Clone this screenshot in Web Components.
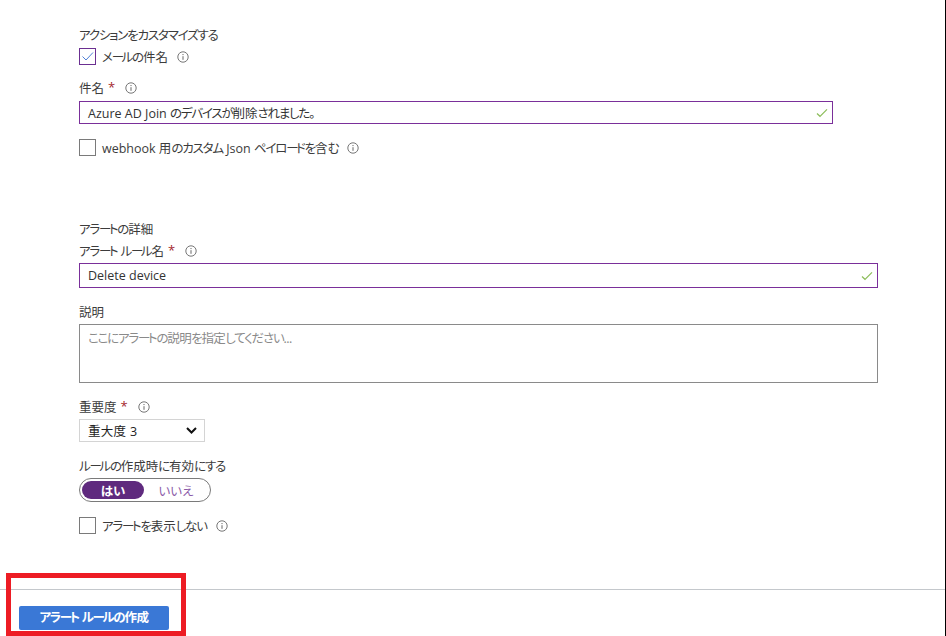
<!DOCTYPE html>
<html lang="ja">
<head>
<meta charset="utf-8">
<title>アラート ルールの作成</title>
<style>
  html, body { margin: 0; height: 100%; background: #fff; }
  body { font: 12.5px "Open Sans", "Noto Sans CJK JP", sans-serif; font-feature-settings: "palt"; color: #3c3c3c; overflow: hidden; }
</style>
</head>
<body>
<alert-page></alert-page>
<script>
const INFO = `<svg width="12" height="12" viewBox="0 0 12 12" fill="none" stroke="#666"><circle cx="6" cy="6" r="5.2" stroke-width=".9"/><path d="M6 5.2v3.6M6 3v1.1" stroke-width="1"/></svg>`;

// kana runs sit tighter than kanji in the reference font, long vowel marks tighter still
const fit = s => s.replace(/ー|[ぁ-んァ-ヶ]+/g, m =>
  `<span class="${m === "ー" ? "bar" : "kana"}">${m}</span>`);

class InfoIcon extends HTMLElement {
  constructor() {
    super();
    this.attachShadow({ mode: "open" }).innerHTML = `
      <style>:host { display: inline-flex; margin-left: 9px; }</style>${INFO}`;
  }
}

class FieldLabel extends HTMLElement {
  constructor() {
    super();
    const req = this.hasAttribute("required") ? `<span class="req">*</span>` : "";
    const info = this.hasAttribute("info") ? `<info-icon></info-icon>` : "";
    this.attachShadow({ mode: "open" }).innerHTML = `
      <style>
        :host { display: flex; align-items: center; box-sizing: border-box; height: 18px; padding-bottom: 2px; color: #3c3c3c; }
        .req { color: #a4262c; margin-left: 4px; font-size: 13px; }
        info-icon { margin-left: 10px; position: relative; top: 1px; }
      </style>
      <span><slot></slot></span>${req}${info}`;
  }
}

class CheckField extends HTMLElement {
  constructor() {
    super();
    const on = this.hasAttribute("checked");
    this.attachShadow({ mode: "open" }).innerHTML = `
      <style>
        :host { display: flex; align-items: center; height: 17px; }
        .box { width: 15px; height: 15px; border: 1px solid ${on ? "#6b2f91" : "#7a7a7a"}; margin-right: 6px; display: flex; align-items: center; justify-content: center; }
      </style>
      <span class="box">${on ? `<svg width="13" height="11" viewBox="0 0 13 11" fill="none"><path d="M1.5 5.5l3.5 3.5 7-7.5" stroke="#4f7fd6" stroke-width="1"/></svg>` : ""}</span>
      <span><slot></slot></span><info-icon></info-icon>`;
  }
}

class TextField extends HTMLElement {
  constructor() {
    super();
    this.attachShadow({ mode: "open" }).innerHTML = `
      <style>
        :host { display: flex; align-items: center; box-sizing: border-box; border: 1px solid #7a2f9a; padding: 0 4px 0 8px; color: #333; }
        .t { flex: 1; }
      </style>
      <span class="t"><slot></slot></span>
      <svg width="12" height="10" viewBox="0 0 12 10" fill="none"><path d="M1 5.5l3 2.8 7-7" stroke="#8cbd5a" stroke-width="1.2"/></svg>`;
  }
}

class NoteArea extends HTMLElement {
  constructor() {
    super();
    this.attachShadow({ mode: "open" }).innerHTML = `
      <style>
        :host { display: block; box-sizing: border-box; height: 59px; border: 1px solid #8a8a8a; padding: 3px 8px; color: #8a8a8a; letter-spacing: -.6px; }
      </style><slot></slot>`;
  }
}

class SelectBox extends HTMLElement {
  constructor() {
    super();
    this.attachShadow({ mode: "open" }).innerHTML = `
      <style>
        :host { display: flex; align-items: center; justify-content: space-between; box-sizing: border-box; width: 126px; height: 23px; border: 1px solid #d4d4d4; padding: 0 7px 0 8px; color: #222; font-size: 12.5px; letter-spacing: .3px; }
      </style>
      <span><slot></slot></span>
      <svg width="11" height="7" viewBox="0 0 11 7" fill="none"><path d="M1 1l4.5 4.5L10 1" stroke="#111" stroke-width="2"/></svg>`;
  }
}

class YesNo extends HTMLElement {
  constructor() {
    super();
    this.attachShadow({ mode: "open" }).innerHTML = `
      <style>
        :host { display: flex; box-sizing: border-box; width: 132px; height: 24px; border: 1px solid #7a7a7a; border-radius: 12px; padding: 2px; }
        span { display: flex; align-items: center; justify-content: center; border-radius: 9px; }
        .on { width: 62px; background: #5f2a7e; color: #fff; font-weight: 700; }
        .off { flex: 1; color: #8a5aa8; }
      </style>
      <span class="on">はい</span><span class="off">いいえ</span>`;
  }
}

class FooterBar extends HTMLElement {
  constructor() {
    super();
    this.attachShadow({ mode: "open" }).innerHTML = `
      <style>
        :host { display: block; border-top: 1px solid #c4c8cc; padding: 16px 0 0 19px; }
        button { display: block; width: 150px; height: 24px; padding: 0 0 3px; border: 0; border-radius: 2px; background: #3a78d6; color: #fff; font: 700 12.5px "Open Sans", "Noto Sans CJK JP", sans-serif; font-feature-settings: "palt"; letter-spacing: -.4px; }
      </style>
      <button><slot></slot></button>`;
  }
}

class AlertPage extends HTMLElement {
  constructor() {
    super();
    this.attachShadow({ mode: "open" }).innerHTML = `
      <style>
        :host { display: block; position: relative; box-sizing: border-box; height: 636px; border-right: 1px solid #000; padding-top: 26px; }
        .form { padding-left: 79px; width: 878px; height: 563px; box-sizing: border-box; }
        .narrow { width: 754px; height: 23px; margin-top: 4px; }
        .wide { height: 25px; margin-top: 3px; }
        .mt-check { margin-top: 15px; }
        .kana { letter-spacing: -1.2px; }
        .bar { letter-spacing: -2.5px; }
        .mark {
          position: absolute; left: 6px; top: 573px; width: 180px; height: 63px;
          box-sizing: border-box; border: 5px solid #ed1c24; pointer-events: none;
        }
      </style>
      <div class="form">
        <field-label>${fit("アクションをカスタマイズする")}</field-label>
        <check-field checked style="margin-top:4px">${fit("メールの件名")}</check-field>
        <field-label required info style="margin-top:14px">件名</field-label>
        <text-field class="narrow">${fit("Azure AD Join のデバイスが削除されました。")}</text-field>
        <check-field class="mt-check">${fit("webhook 用のカスタム Json ペイロードを含む")}</check-field>
        <field-label style="margin-top:64px">${fit("アラートの詳細")}</field-label>
        <field-label required info style="margin-top:4px">${fit("アラート ルール名")}</field-label>
        <text-field class="wide">Delete device</text-field>
        <field-label style="margin-top:15px">説明</field-label>
        <note-area style="margin-top:3px">${fit("ここにアラートの説明を指定してください...")}</note-area>
        <field-label required info style="margin-top:15px">重要度</field-label>
        <select-box style="margin-top:3px">重大度 3</select-box>
        <field-label style="margin-top:15px">${fit("ルールの作成時に有効にする")}</field-label>
        <yes-no style="margin-top:3px"></yes-no>
        <check-field style="margin-top:15px">${fit("アラートを表示しない")}</check-field>
      </div>
      <footer-bar>${fit("アラート ルールの作成")}</footer-bar>
      <div class="mark"></div>`;
  }
}

customElements.define("info-icon", InfoIcon);
customElements.define("field-label", FieldLabel);
customElements.define("check-field", CheckField);
customElements.define("text-field", TextField);
customElements.define("note-area", NoteArea);
customElements.define("select-box", SelectBox);
customElements.define("yes-no", YesNo);
customElements.define("footer-bar", FooterBar);
customElements.define("alert-page", AlertPage);
</script>
</body>
</html>
